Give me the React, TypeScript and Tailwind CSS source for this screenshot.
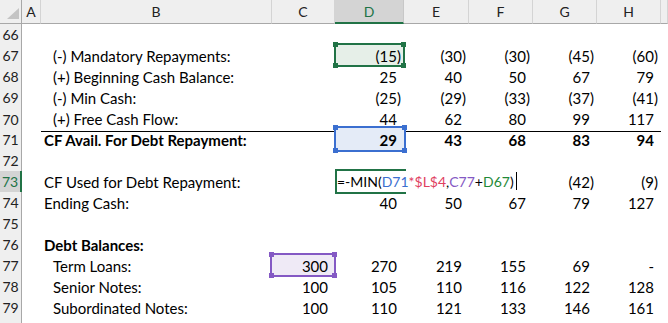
import React from "react";

type Row = {
  n: number;
  label?: string;
  indent?: boolean;
  bold?: boolean;
  vals?: (string | null)[];
  line?: boolean;
  hideNum?: boolean;
};

const rows: Row[] = [
  { n: 66 },
  { n: 67, label: "(-) Mandatory Repayments:", indent: true, vals: [null, "(15)", "(30)", "(30)", "(45)", "(60)"] },
  { n: 68, label: "(+) Beginning Cash Balance:", indent: true, vals: [null, "25", "40", "50", "67", "79"] },
  { n: 69, label: "(-) Min Cash:", indent: true, vals: [null, "(25)", "(29)", "(33)", "(37)", "(41)"] },
  { n: 70, label: "(+) Free Cash Flow:", indent: true, vals: [null, "44", "62", "80", "99", "117"], line: true },
  { n: 71, label: "CF Avail. For Debt Repayment:", bold: true, vals: [null, "29", "43", "68", "83", "94"] },
  { n: 72 },
  { n: 73, label: "CF Used for Debt Repayment:", vals: [null, null, null, null, "(42)", "(9)"] },
  { n: 74, label: "Ending Cash:", vals: [null, "40", "50", "67", "79", "127"] },
  { n: 75 },
  { n: 76, label: "Debt Balances:", bold: true },
  { n: 77, label: "Term Loans:", indent: true, vals: ["300", "270", "219", "155", "69", "-"] },
  { n: 78, label: "Senior Notes:", indent: true, vals: ["100", "105", "110", "116", "122", "128"] },
  { n: 79, label: "Subordinated Notes:", indent: true, vals: ["100", "110", "121", "133", "146", "161"] },
  { n: 80, hideNum: true },
];

const GRID = "grid grid-cols-[22px_19px_231px_63px_69px_65px_64px_64px_64px_1fr]";

function Num({ v }: { v: string }) {
  const paren = v.endsWith(")");
  return (
    <span className="relative">
      {v}
      {!paren && <span className="invisible">)</span>}
    </span>
  );
}

function Handles({ color }: { color: string }) {
  return (
    <>
      <div className={`absolute w-[5px] h-[5px] -left-[3px] -top-[3px] ${color}`} />
      <div className={`absolute w-[5px] h-[5px] -right-[3px] -top-[3px] ${color}`} />
      <div className={`absolute w-[5px] h-[5px] -left-[3px] -bottom-[3px] ${color}`} />
      <div className={`absolute w-[5px] h-[5px] -right-[3px] -bottom-[3px] ${color}`} />
    </>
  );
}

function Overlay({ n, col }: { n: number; col: number }) {
  if (n === 67 && col === 1)
    return (
      <div className="absolute -left-px -top-0.5 -right-px bottom-px border-2 border-[#217346] bg-[#e6efe8]">
        <Handles color="bg-[#217346]" />
      </div>
    );
  if (n === 71 && col === 1)
    return (
      <div className="absolute -left-px -top-[3px] -right-0.5 bottom-0 border-2 border-[#3b6fd0] bg-[#e4ebf7]">
        <Handles color="bg-[#3b6fd0]" />
      </div>
    );
  if (n === 77 && col === 0)
    return (
      <div className="absolute -left-0.5 -top-0.5 -right-px bottom-px border-2 border-[#8459c4] bg-[#efeaf6]">
        <Handles color="bg-[#8459c4]" />
      </div>
    );
  return null;
}

function Formula() {
  return (
    <>
      <div className="absolute left-0 -top-0.5 -right-0.5 bottom-0 border-2 border-[#217346]" />
      <div className="absolute left-[2px] top-0 bottom-[2px] z-10 bg-white whitespace-nowrap flex items-center pr-[2px] text-[14px]">
        <span className="text-black">=-MIN(</span>
        <span className="text-[#3b6fd0]">D71</span>
        <span className="text-[#e0405f]">*</span>
        <span className="text-[#e0405f]">$L$4</span>
        <span className="text-black">,</span>
        <span className="text-[#8459c4]">C77</span>
        <span className="text-black">+</span>
        <span className="text-[#1f8a38]">D67</span>
        <span className="text-black">)</span>
        <span className="inline-block w-px h-[18px] bg-black ml-[2px]" />
      </div>
    </>
  );
}

export default function App() {
  const headers = ["A", "B", "C", "D", "E", "F", "G", "H", ""];
  return (
    <div className="w-[668px] h-[323px] overflow-hidden bg-white [font-family:Lato,'Open_Sans',sans-serif] text-[15px] text-black">
      {/* header */}
      <div className={`${GRID} h-[24px]`}>
        <div className="relative bg-[#efefef] border-r border-b border-[#a8a8a8]">
          <svg className="absolute left-0 top-0" width="22" height="24" viewBox="0 0 22 24">
            <polygon points="7,19 19,19 19,8" fill="#c4c4c4" />
          </svg>
        </div>
        {headers.map((h, i) =>
          h === "D" ? (
            <div
              key={i}
              className="bg-[#d4d4d4] border-r border-[#c8c8c8] border-b-2 border-b-[#217346] flex items-center justify-center text-[14px] text-[#217346]"
            >
              {h}
            </div>
          ) : (
            <div
              key={i}
              className="bg-[#efefef] border-r border-[#d4d4d4] border-b border-b-[#a8a8a8] flex items-center justify-center text-[14px] text-[#222]"
            >
              {h}
            </div>
          )
        )}
      </div>
      {/* rows */}
      {rows.map((r) => {
        const sel = r.n === 73;
        return (
          <div key={r.n} className={`${GRID} h-[21px]`}>
            {sel ? (
              <div className="bg-[#d4d4d4] border-r-2 border-r-[#217346] border-b border-b-[#d4d4d4] flex items-center justify-center text-[14px] text-[#217346]">
                {r.n}
              </div>
            ) : (
              <div className="bg-[#efefef] border-r border-r-[#a8a8a8] border-b border-b-[#d4d4d4] flex items-center justify-center text-[14px] text-[#222]">
                {r.hideNum ? "" : r.n}
              </div>
            )}
            <div />
            <div
              className={`flex items-center whitespace-nowrap ${r.indent ? "pl-[12px]" : "pl-[3px]"} ${
                r.bold ? "font-bold" : ""
              } ${r.line ? "border-b border-black" : ""}`}
            >
              {r.label}
            </div>
            {[0, 1, 2, 3, 4, 5].map((c) => {
              const v = r.vals ? r.vals[c] : null;
              return (
                <div
                  key={c}
                  className={`relative flex items-center justify-end pr-[3px] whitespace-nowrap ${
                    r.bold ? "font-bold" : ""
                  } ${r.line ? "border-b border-black" : ""}`}
                >
                  <Overlay n={r.n} col={c} />
                  {r.n === 73 && c === 1 && <Formula />}
                  {v && <Num v={v} />}
                </div>
              );
            })}
            <div />
          </div>
        );
      })}
    </div>
  );
}
